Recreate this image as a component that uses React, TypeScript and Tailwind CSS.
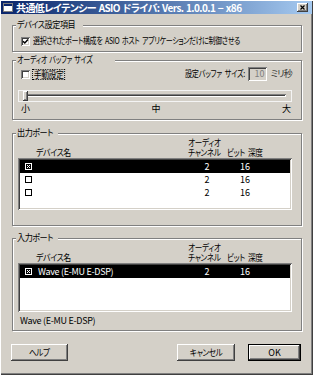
import React from "react";

const F = "font-['Noto_Sans_CJK_JP','Noto_Sans',sans-serif] [font-feature-settings:'palt']";

function Check({ checked }: { checked?: boolean }) {
  return (
    <div className="w-[9px] h-[9px] bg-white shrink-0 shadow-[inset_1px_1px_0_#808080,inset_-1px_-1px_0_#fff,inset_2px_2px_0_#404040,inset_-2px_-2px_0_#d4d0c8] flex items-center justify-center">
      {checked && (
        <svg width="7" height="7" viewBox="0 0 7 7">
          <path d="M1 3.2 L2.8 5 L6 1.6" stroke="#000" strokeWidth="1.5" fill="none" />
        </svg>
      )}
    </div>
  );
}

function ListCheck({ checked, dark }: { checked?: boolean; dark?: boolean }) {
  const c = dark ? "#ffffff" : "#000000";
  return (
    <svg width="7" height="7" viewBox="0 0 7 7" className="shrink-0">
      <rect x="0.5" y="0.5" width="6" height="6" fill="none" stroke={c} />
      {checked && <path d="M2 2 L5 5 M5 2 L2 5" stroke={c} />}
    </svg>
  );
}

function Group({ label, labelClass, className, children }: { label: string; labelClass: string; className: string; children?: React.ReactNode }) {
  return (
    <div className={`border border-[#808080] shadow-[inset_1px_1px_0_#fff,1px_1px_0_#fff] flex flex-col ${className}`}>
      <div className="-mt-[6px] ml-[3px] self-start bg-[#d4d0c8] px-[1px] h-[10px] leading-[10px]">
        <span className={`inline-block origin-left whitespace-nowrap ${labelClass}`}>{label}</span>
      </div>
      {children}
    </div>
  );
}

function Headers() {
  return (
    <div className="ml-[5px] mr-[9px] h-[20px] flex items-end px-[2px] leading-[10px]">
      <div className="flex-1 pl-[16px]">
        <span className="inline-block origin-left scale-x-[0.88] tracking-[-0.4px] whitespace-nowrap">デバイス名</span>
      </div>
      <div className="w-[39px]">
        <span className="inline-block origin-left scale-x-[0.85] tracking-[-0.4px] whitespace-nowrap">
          オーディオ
          <br />
          チャンネル
        </span>
      </div>
      <div className="w-[63px]">
        <span className="inline-block origin-left scale-x-[0.85] tracking-[-0.4px] [word-spacing:2px] whitespace-nowrap">ビット 深度</span>
      </div>
    </div>
  );
}

function Row({ checked, selected, name }: { checked?: boolean; selected?: boolean; name?: string }) {
  return (
    <div className={`h-[13px] flex items-center pl-[5px] pr-[24px] ${selected ? "bg-black text-white" : "bg-white text-black"}`}>
      <ListCheck checked={checked} dark={selected} />
      <span className="ml-[6px] flex-1 tracking-[-0.3px] whitespace-nowrap">{name}</span>
      <span className="w-[34px] text-center">2</span>
      <span className="w-[42px] text-center">16</span>
    </div>
  );
}

const sunken = "shadow-[inset_1px_1px_0_#808080,inset_-1px_-1px_0_#fff,inset_2px_2px_0_#404040,inset_-2px_-2px_0_#d4d0c8]";
const raised = "shadow-[inset_-1px_-1px_0_#404040,inset_1px_1px_0_#fff,inset_-2px_-2px_0_#808080]";

export default function App() {
  return (
    <div className={`${F} w-[313px] h-[375px] bg-[#d4d0c8] text-black text-[9px] leading-[10px] flex flex-col overflow-hidden shadow-[inset_1px_1px_0_#fff,inset_-1px_-1px_0_#404040,inset_-2px_-2px_0_#808080]`}>
      {/* title bar */}
      <div className="mx-[1px] mt-[1px] h-[13px] bg-linear-to-r from-[#0a246a] to-[#a6caf0] flex items-center pl-[2px] pr-[4px]">
        <svg width="10" height="9" viewBox="0 0 10 9" className="shrink-0">
          <rect x="0.5" y="0.5" width="9" height="8" fill="#ffffff" stroke="#808080" />
          <rect x="1" y="1" width="8" height="2" fill="#0a246a" />
        </svg>
        <span className="ml-[3px] text-white font-bold text-[10px] leading-[12px] tracking-[-0.6px] [word-spacing:1px] whitespace-nowrap">共通低レイテンシー ASIO ドライバ: Vers. 1.0.0.1 − x86</span>
        <div className={`ml-auto w-[11px] h-[9px] bg-[#d4d0c8] ${raised} flex items-center justify-center`}>
          <svg width="5" height="5" viewBox="0 0 5 5">
            <path d="M0.5 0.5 L4.5 4.5 M4.5 0.5 L0.5 4.5" stroke="#000" strokeWidth="1.2" />
          </svg>
        </div>
      </div>

      <div className="flex flex-col pl-[12px] pr-[11px]">
        <Group label="デバイス設定項目" labelClass="scale-x-[0.9] tracking-[-0.5px]" className="mt-[11px] h-[27px]">
          <div className="mt-[6px] ml-[8px] h-[10px] flex items-center gap-[3px]">
            <Check checked />
            <span className="inline-block origin-left scale-x-[0.78] tracking-[-0.5px] [word-spacing:2px] whitespace-nowrap">選択されたポート構成を ASIO ホスト アプリケーションだけに制御させる</span>
          </div>
        </Group>

        <Group label="オーディオ バッファ サイズ" labelClass="scale-x-[0.78] tracking-[-0.3px] [word-spacing:1px]" className="mt-[8px] h-[60px]">
          <div className="mt-[2px] ml-[8px] mr-[9px] h-[14px] flex items-center">
            <Check />
            <span className="ml-[2px] inline-block origin-left scale-x-[0.87] border border-dotted border-black px-[1px] h-[11px] leading-[9px] tracking-[-0.5px] whitespace-nowrap">手動設定</span>
            <span className="ml-auto inline-block origin-right scale-x-[0.79] tracking-[-0.3px] [word-spacing:2px] whitespace-nowrap">設定バッファ サイズ:</span>
            <div className={`ml-[3px] w-[19px] h-[14px] ${sunken} flex items-center justify-end pr-[2px] text-[#808080]`}>10</div>
            <span className="ml-[4px] text-[#333] tracking-[-0.8px] whitespace-nowrap">ミリ秒</span>
          </div>
          <div className="mt-[9px] ml-[5px] mr-[9px] h-[12px] border border-[#f4f4f4] relative">
            <div className="mt-[3px] mx-[5px] h-[3px] bg-[#d4d0c8] shadow-[inset_1px_1px_0_#808080,inset_-1px_-1px_0_#fff,inset_0_2px_0_#404040]" />
            <div className={`absolute left-[4px] top-[0px] w-[5px] h-[10px] bg-[#d4d0c8] ${raised}`} />
          </div>
          <div className="mt-[2px] ml-[8px] mr-[10px] h-[10px] flex justify-between">
            <span>小</span>
            <span>中</span>
            <span>大</span>
          </div>
        </Group>

        <Group label="出力ポート" labelClass="scale-x-[0.9] tracking-[-0.5px]" className="mt-[13px] h-[93px]">
          <Headers />
          <div className={`ml-[5px] mr-[9px] h-[52px] bg-white p-[2px] ${sunken} flex flex-col`}>
            <Row checked selected />
            <Row />
            <Row />
          </div>
        </Group>

        <Group label="入力ポート" labelClass="scale-x-[0.9] tracking-[-0.5px]" className="mt-[12px] h-[93px]">
          <Headers />
          <div className={`ml-[5px] mr-[9px] h-[49px] bg-white p-[2px] ${sunken} flex flex-col`}>
            <Row checked selected name="Wave (E-MU E-DSP)" />
          </div>
          <div className="mt-[4px] ml-[7px] h-[10px] tracking-[-0.3px] whitespace-nowrap">Wave (E-MU E-DSP)</div>
        </Group>
      </div>

      <div className="mt-[13px] pl-[11px] pr-[12px] flex">
        <div className={`w-[57px] h-[17px] ${raised} flex items-center justify-center`}>
          <span className="inline-block scale-x-[0.85] tracking-[-0.5px] whitespace-nowrap">ヘルプ</span>
        </div>
        <div className={`ml-auto w-[58px] h-[17px] ${raised} flex items-center justify-center`}>
          <span className="inline-block scale-x-[0.85] tracking-[-0.5px] whitespace-nowrap">キャンセル</span>
        </div>
        <div className="ml-[13px] w-[53px] h-[17px] border border-black">
          <div className={`w-full h-full ${raised} flex items-center justify-center`}>OK</div>
        </div>
      </div>
    </div>
  );
}
